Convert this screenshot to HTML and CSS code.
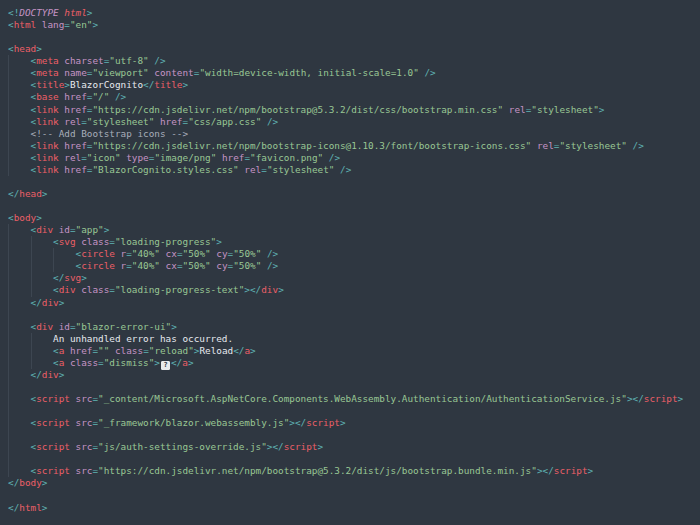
FILE: index.html
```html
<!DOCTYPE html>
<html lang="en">
<head>
<meta charset="utf-8">
<title>index.html</title>
<link rel="stylesheet" href="styles.css">
</head>
<body>
<div class="code">
<div class="ln"><span class="p">&lt;!</span><span class="k">DOCTYPE</span> <span class="ti">html</span><span class="p">&gt;</span></div>
<div class="ln"><span class="p">&lt;</span><span class="t">html</span> <span class="a">lang</span><span class="p">=</span><span class="s">"en"</span><span class="p">&gt;</span></div>
<div class="ln"></div>
<div class="ln"><span class="p">&lt;</span><span class="t">head</span><span class="p">&gt;</span></div>
<div class="blk">
<div class="ln"><span class="p">&lt;</span><span class="t">meta</span> <span class="a">charset</span><span class="p">=</span><span class="s">"utf-8"</span> <span class="p">/&gt;</span></div>
<div class="ln"><span class="p">&lt;</span><span class="t">meta</span> <span class="a">name</span><span class="p">=</span><span class="s">"viewport"</span> <span class="a">content</span><span class="p">=</span><span class="s">"width=device-width, initial-scale=1.0"</span> <span class="p">/&gt;</span></div>
<div class="ln"><span class="p">&lt;</span><span class="t">title</span><span class="p">&gt;</span><span class="x">BlazorCognito</span><span class="p">&lt;/</span><span class="t">title</span><span class="p">&gt;</span></div>
<div class="ln"><span class="p">&lt;</span><span class="t">base</span> <span class="a">href</span><span class="p">=</span><span class="s">"/"</span> <span class="p">/&gt;</span></div>
<div class="ln"><span class="p">&lt;</span><span class="t">link</span> <span class="a">href</span><span class="p">=</span><span class="s">"https://cdn.jsdelivr.net/npm/bootstrap@5.3.2/dist/css/bootstrap.min.css"</span> <span class="a">rel</span><span class="p">=</span><span class="s">"stylesheet"</span><span class="p">&gt;</span></div>
<div class="ln"><span class="p">&lt;</span><span class="t">link</span> <span class="a">rel</span><span class="p">=</span><span class="s">"stylesheet"</span> <span class="a">href</span><span class="p">=</span><span class="s">"css/app.css"</span> <span class="p">/&gt;</span></div>
<div class="ln"><span class="c">&lt;!-- Add Bootstrap icons --&gt;</span></div>
<div class="ln"><span class="p">&lt;</span><span class="t">link</span> <span class="a">href</span><span class="p">=</span><span class="s">"https://cdn.jsdelivr.net/npm/bootstrap-icons@1.10.3/font/bootstrap-icons.css"</span> <span class="a">rel</span><span class="p">=</span><span class="s">"stylesheet"</span> <span class="p">/&gt;</span></div>
<div class="ln"><span class="p">&lt;</span><span class="t">link</span> <span class="a">rel</span><span class="p">=</span><span class="s">"icon"</span> <span class="a">type</span><span class="p">=</span><span class="s">"image/png"</span> <span class="a">href</span><span class="p">=</span><span class="s">"favicon.png"</span> <span class="p">/&gt;</span></div>
<div class="ln"><span class="p">&lt;</span><span class="t">link</span> <span class="a">href</span><span class="p">=</span><span class="s">"BlazorCognito.styles.css"</span> <span class="a">rel</span><span class="p">=</span><span class="s">"stylesheet"</span> <span class="p">/&gt;</span></div>
</div>
<div class="ln"></div>
<div class="ln"><span class="p">&lt;/</span><span class="t">head</span><span class="p">&gt;</span></div>
<div class="ln"></div>
<div class="ln"><span class="p">&lt;</span><span class="t">body</span><span class="p">&gt;</span></div>
<div class="blk">
<div class="ln"><span class="p">&lt;</span><span class="t">div</span> <span class="a">id</span><span class="p">=</span><span class="s">"app"</span><span class="p">&gt;</span></div>
<div class="blk">
<div class="ln"><span class="p">&lt;</span><span class="t">svg</span> <span class="a">class</span><span class="p">=</span><span class="s">"loading-progress"</span><span class="p">&gt;</span></div>
<div class="blk">
<div class="ln"><span class="p">&lt;</span><span class="t">circle</span> <span class="a">r</span><span class="p">=</span><span class="s">"40%"</span> <span class="a">cx</span><span class="p">=</span><span class="s">"50%"</span> <span class="a">cy</span><span class="p">=</span><span class="s">"50%"</span> <span class="p">/&gt;</span></div>
<div class="ln"><span class="p">&lt;</span><span class="t">circle</span> <span class="a">r</span><span class="p">=</span><span class="s">"40%"</span> <span class="a">cx</span><span class="p">=</span><span class="s">"50%"</span> <span class="a">cy</span><span class="p">=</span><span class="s">"50%"</span> <span class="p">/&gt;</span></div>
</div>
<div class="ln"><span class="p">&lt;/</span><span class="t">svg</span><span class="p">&gt;</span></div>
<div class="ln"><span class="p">&lt;</span><span class="t">div</span> <span class="a">class</span><span class="p">=</span><span class="s">"loading-progress-text"</span><span class="p">&gt;&lt;/</span><span class="t">div</span><span class="p">&gt;</span></div>
</div>
<div class="ln"><span class="p">&lt;/</span><span class="t">div</span><span class="p">&gt;</span></div>
<div class="ln"></div>
<div class="ln"><span class="p">&lt;</span><span class="t">div</span> <span class="a">id</span><span class="p">=</span><span class="s">"blazor-error-ui"</span><span class="p">&gt;</span></div>
<div class="blk">
<div class="ln"><span class="x">An unhandled error has occurred.</span></div>
<div class="ln"><span class="p">&lt;</span><span class="t">a</span> <span class="a">href</span><span class="p">=</span><span class="s">""</span> <span class="a">class</span><span class="p">=</span><span class="s">"reload"</span><span class="p">&gt;</span><span class="x">Reload</span><span class="p">&lt;/</span><span class="t">a</span><span class="p">&gt;</span></div>
<div class="ln"><span class="p">&lt;</span><span class="t">a</span> <span class="a">class</span><span class="p">=</span><span class="s">"dismiss"</span><span class="p">&gt;</span><span class="glyph">?</span><span class="p">&lt;/</span><span class="t">a</span><span class="p">&gt;</span></div>
</div>
<div class="ln"><span class="p">&lt;/</span><span class="t">div</span><span class="p">&gt;</span></div>
<div class="ln"></div>
<div class="ln"><span class="p">&lt;</span><span class="t">script</span> <span class="a">src</span><span class="p">=</span><span class="s">"_content/Microsoft.AspNetCore.Components.WebAssembly.Authentication/AuthenticationService.js"</span><span class="p">&gt;&lt;/</span><span class="t">script</span><span class="p">&gt;</span></div>
<div class="ln"></div>
<div class="ln"><span class="p">&lt;</span><span class="t">script</span> <span class="a">src</span><span class="p">=</span><span class="s">"_framework/blazor.webassembly.js"</span><span class="p">&gt;&lt;/</span><span class="t">script</span><span class="p">&gt;</span></div>
<div class="ln"></div>
<div class="ln"><span class="p">&lt;</span><span class="t">script</span> <span class="a">src</span><span class="p">=</span><span class="s">"js/auth-settings-override.js"</span><span class="p">&gt;&lt;/</span><span class="t">script</span><span class="p">&gt;</span></div>
<div class="ln"></div>
<div class="ln"><span class="p">&lt;</span><span class="t">script</span> <span class="a">src</span><span class="p">=</span><span class="s">"https://cdn.jsdelivr.net/npm/bootstrap@5.3.2/dist/js/bootstrap.bundle.min.js"</span><span class="p">&gt;&lt;/</span><span class="t">script</span><span class="p">&gt;</span></div>
</div>
<div class="ln"><span class="p">&lt;/</span><span class="t">body</span><span class="p">&gt;</span></div>
<div class="ln"></div>
<div class="ln"><span class="p">&lt;/</span><span class="t">html</span><span class="p">&gt;</span></div>
</div>
</body>
</html>
```

FILE: styles.css
```css
html, body {
  margin: 0;
  padding: 0;
  background: #2f3741;
  height: 100%;
  overflow: hidden;
}

.code {
  padding: 7px 0 0 8px;
  font-family: "DejaVu Sans Mono", "Liberation Mono", monospace;
  font-size: 9.35px;
  line-height: 12.07px;
  color: #d8dee9;
}

.ln {
  height: 12.07px;
  white-space: pre;
}

.blk {
  border-left: 1px solid #3d4651;
  padding-left: calc(4ch - 1px);
}

.p { color: #5fb3b3; }
.t { color: #ec5f67; }
.ti { color: #ec5f67; font-style: italic; }
.k { color: #c594c5; font-style: italic; }
.a { color: #c594c5; }
.s { color: #99c794; }
.x { color: #e6e9ee; }
.c { color: #a7adba; }

.glyph {
  display: inline-block;
  box-sizing: border-box;
  width: 9px;
  height: 9px;
  margin: 0 1px 0 1px;
  background: #e8eaec;
  border: 1px solid #e8eaec;
  border-radius: 1px;
  color: #2f3741;
  font-size: 7px;
  line-height: 7px;
  font-weight: bold;
  text-align: center;
  vertical-align: -1px;
}
```
